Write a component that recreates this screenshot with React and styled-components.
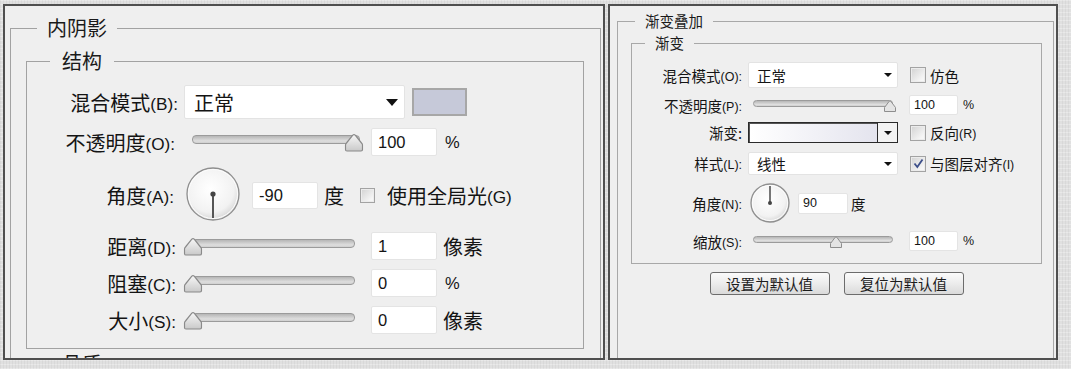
import React, { useId } from "react";
import styled, { createGlobalStyle } from "styled-components";

const GlobalStyle = createGlobalStyle`
  html, body { margin: 0; padding: 0; }
  body {
    width: 1071px;
    height: 369px;
    overflow: hidden;
    background-color: #e0e0e0;
    background-image:
      repeating-linear-gradient(90deg, rgba(0,0,0,0.035) 0 1px, transparent 1px 3px),
      repeating-linear-gradient(0deg, rgba(255,255,255,0.3) 0 1px, transparent 1px 4px);
    font-family: "Noto Sans CJK SC", "Liberation Sans", sans-serif;
    color: #141414;
  }
`;

const Page = styled.div`
  display: flex;
  align-items: flex-start;
  gap: 3px;
  padding: 4px 0 0 3px;
`;

const Panel = styled.div`
  box-sizing: border-box;
  width: ${p => p.$w}px;
  height: 356px;
  border: 2px solid #4f4f4f;
  background: #efefef;
  overflow: hidden;
  padding: ${p => p.$pad};
  font-size: ${p => (p.$sm ? "14.5px" : "20px")};
`;

const Group = styled.fieldset`
  margin: ${p => p.$m || "0"};
  padding: ${p => p.$pad};
  border: 1px solid ${p => (p.$sm ? "#a8a8a8" : "#a2a2a2")};
  min-width: 0;
  ${p => p.$minH && `min-height: ${p.$minH}px;`}
`;

const Legend = styled.legend`
  margin-left: ${p => p.$ml}px;
  padding: 0 ${p => p.$pl}px;
  font-size: ${p => (p.$sm ? "14.5px" : "20px")};
  line-height: ${p => (p.$sm ? "18px" : "24px")};
  color: #1a1a1a;
`;

const Rows = styled.div`
  display: flex;
  flex-direction: column;
`;

const Row = styled.div`
  display: flex;
  align-items: center;
  height: ${p => p.$h}px;
  margin-bottom: ${p => p.$mb || 0}px;
`;

const Label = styled.span`
  flex: none;
  width: ${p => p.$w}px;
  text-align: right;
  white-space: nowrap;
`;

const Key = styled.span`
  font-family: "Liberation Sans", sans-serif;
  font-size: 0.86em;
  vertical-align: 0.07em;
`;

const Select = styled.div`
  box-sizing: border-box;
  flex: none;
  display: flex;
  align-items: center;
  justify-content: space-between;
  width: ${p => p.$w}px;
  height: 100%;
  margin-left: ${p => p.$ml}px;
  padding: 0 ${p => (p.$sm ? 5 : 6)}px 0 ${p => (p.$sm ? 8 : 9)}px;
  background: #fff;
  border: 1px solid #e3e3e3;
  border-radius: 2px;
`;

const Caret = styled.span`
  width: 0;
  height: 0;
  border-left: ${p => (p.$sm ? 4 : 6.5)}px solid transparent;
  border-right: ${p => (p.$sm ? 4 : 6.5)}px solid transparent;
  border-top: ${p => (p.$sm ? 4 : 7)}px solid #111;
`;

const Swatch = styled.span`
  box-sizing: border-box;
  width: 55px;
  height: 28px;
  margin-left: 7px;
  background: #c6c9d9;
  border: 2px solid #a7a7a7;
`;

const NumField = styled.div`
  box-sizing: border-box;
  flex: none;
  display: flex;
  align-items: center;
  width: ${p => p.$w}px;
  height: ${p => p.$h}px;
  margin-left: ${p => p.$ml}px;
  padding-left: ${p => (p.$sm ? 4 : 6)}px;
  background: #fff;
  border: 1px solid #e4e4e4;
  border-radius: 2px;
  font-family: "Liberation Sans", sans-serif;
  font-size: ${p => (p.$sm ? "12.5px" : "16.5px")};
`;

const Unit = styled.span`
  margin-left: ${p => p.$ml}px;
  white-space: nowrap;
  ${p => p.$latin && `font-family: "Liberation Sans", sans-serif; font-size: ${p.$sm ? "12.5px" : "16.5px"};`}
`;

const SliderBox = styled.div`
  position: relative;
  box-sizing: border-box;
  flex: none;
  display: flex;
  align-items: center;
  width: ${p => p.$w}px;
  height: 100%;
  margin-left: ${p => p.$ml}px;
  padding: ${p => (p.$sm ? "0 5px" : `0 ${p.$pr}px 0 7px`)};
`;

const Track = styled.div`
  flex: 1;
  height: ${p => (p.$sm ? 5 : 7)}px;
  margin-top: ${p => (p.$sm ? -4 : -6)}px;
  border: 1px solid #9b9b9b;
  border-radius: 4px;
  background: linear-gradient(#b6b6b6, #dedede 70%, #cfcfcf);
`;

const Thumb = styled.div`
  position: absolute;
  top: calc(50% - ${p => (p.$sm ? 5 : 9)}px);
  display: flex;
  transform: translateX(-50%);
`;

const DialSvg = styled.svg`
  flex: none;
  margin-left: ${p => p.$ml}px;
  margin-top: ${p => p.$mt || 0}px;
`;

const CheckBox = styled.span`
  box-sizing: border-box;
  flex: none;
  display: flex;
  align-items: center;
  justify-content: center;
  width: ${p => (p.$sm ? 16 : 15)}px;
  height: ${p => (p.$sm ? 16 : 15)}px;
  margin-left: ${p => p.$ml}px;
  border: 1px solid #a3a3a3;
  background: linear-gradient(135deg, #d2d2d2, #f6f6f6 80%);
  box-shadow: inset 0 0 0 1px #ececec;
`;

const CheckText = styled.span`
  margin-left: ${p => p.$ml}px;
  white-space: nowrap;
`;

const GradField = styled.div`
  box-sizing: border-box;
  flex: none;
  display: flex;
  width: 150px;
  height: 100%;
  margin-left: 6px;
  border: 1px solid #2a2a2a;
  box-shadow: inset 1px 1px 0 #555;
`;

const GradFill = styled.div`
  flex: 1;
  margin: 1px 0 0 1px;
  background: linear-gradient(90deg, #ffffff, #e4e4ee);
`;

const GradDrop = styled.div`
  display: flex;
  align-items: center;
  justify-content: center;
  width: 19px;
  border-left: 1px solid #2a2a2a;
  background: #f3f3f3;
`;

const ButtonRow = styled.div`
  display: flex;
  justify-content: center;
  gap: 14px;
  margin-top: 8px;
`;

const Btn = styled.button`
  box-sizing: border-box;
  width: 120px;
  height: 23px;
  padding: 0;
  border: 1px solid #6c6c6c;
  border-radius: 3px;
  background: linear-gradient(#fbfbfb, #ececec 50%, #dadada);
  font-family: "Noto Sans CJK SC", sans-serif;
  font-size: 14.5px;
  line-height: 21px;
  color: #1c1c1c;
`;

const Slider = ({ sm, w, ml, value, pr = 2 }) => {
  const pad = 8;
  return (
    <SliderBox $sm={sm} $w={w} $ml={ml} $pr={pr}>
      <Track $sm={sm} />
      <Thumb
        $sm={sm}
        style={{ left: `calc(${pad}px + ${value / 100} * (100% - ${pad * 2}px))` }}
      >
        {sm ? (
          <svg width="14" height="12" viewBox="0 0 14 12">
            <path
              d="M1.5 11.5 L1.5 7.5 L6.2 1.3 Q7 0.5 7.8 1.3 L12.5 7.5 L12.5 11.5 Z"
              fill="#e4e4e4"
              stroke="#8e8e8e"
              strokeLinejoin="round"
            />
          </svg>
        ) : (
          <svg width="19" height="19" viewBox="0 0 19 19">
            <defs>
              <linearGradient id="thumbLg" x1="0" y1="0" x2="0" y2="1">
                <stop offset="0" stopColor="#f7f7f7" />
                <stop offset="1" stopColor="#c9c9c9" />
              </linearGradient>
            </defs>
            <path
              d="M2.5 18 Q1 18 1 16.5 L1 12 Q1 11 2 10 L8.3 2.2 Q9.5 1 10.7 2.2 L17 10 Q18 11 18 12 L18 16.5 Q18 18 16.5 18 Z"
              fill="url(#thumbLg)"
              stroke="#8a8a8a"
              strokeWidth="1.2"
            />
          </svg>
        )}
      </Thumb>
    </SliderBox>
  );
};

const Dial = ({ size, angle, ml, mt }) => {
  const id = useId().replace(/:/g, "");
  const r = size / 2;
  const len = r - 3;
  const rad = (angle * Math.PI) / 180;
  const x2 = r + len * Math.cos(rad);
  const y2 = r - len * Math.sin(rad);
  return (
    <DialSvg $ml={ml} $mt={mt} width={size} height={size} viewBox={`0 0 ${size} ${size}`}>
      <defs>
        <radialGradient id={id} cx="0.45" cy="0.4" r="0.6">
          <stop offset="0" stopColor="#ffffff" />
          <stop offset="0.75" stopColor="#f2f2f2" />
          <stop offset="1" stopColor="#d8d8d8" />
        </radialGradient>
      </defs>
      <circle cx={r} cy={r} r={r - 1} fill={`url(#${id})`} stroke="#8f8f8f" strokeWidth="1.3" />
      <circle cx={r} cy={r} r={r - 2.5} fill="none" stroke="#fdfdfd" strokeWidth="1" />
      <line x1={r} y1={r} x2={x2} y2={y2} stroke="#555" strokeWidth={size > 45 ? 2 : 1.6} />
      <circle cx={r} cy={r} r={size > 45 ? 2.6 : 2} fill="#444" />
    </DialSvg>
  );
};

const Tick = () => (
  <svg width="11" height="11" viewBox="0 0 11 11">
    <polyline points="1.5,5.5 4.3,9 9.5,1.5" fill="none" stroke="#3d4f8a" strokeWidth="1.8" />
  </svg>
);

const InnerShadow = () => (
  <Panel $w={602} $pad="10px 2px 0 5px">
    <Group $pad="9px 16px 0 15px" $minH={400}>
      <Legend $ml={11} $pl={10}>内阴影</Legend>
      <Group $pad="12px 0 14px 0">
        <Legend $ml={23} $pl={12}>结构</Legend>
        <Rows>
          <Row $h={34} $mb={9}>
            <Label $w={151}>混合模式<Key>(B):</Key></Label>
            <Select $w={221} $ml={6}>
              正常
              <Caret />
            </Select>
            <Swatch />
          </Row>
          <Row $h={28} $mb={12}>
            <Label $w={148}>不透明度<Key>(O):</Key></Label>
            <Slider w={177} ml={10} value={100} />
            <NumField $w={66} $h={28} $ml={9}>100</NumField>
            <Unit $ml={8} $latin>%</Unit>
          </Row>
          <Row $h={54} $mb={10}>
            <Label $w={147}>角度<Key>(A):</Key></Label>
            <Dial size={54} angle={-90} ml={12} mt={-3} />
            <NumField $w={66} $h={27} $ml={12}>-90</NumField>
            <Unit $ml={6}>度</Unit>
            <CheckBox $ml={16} />
            <CheckText $ml={12}>使用全局光<Key>(G)</Key></CheckText>
          </Row>
          <Row $h={28} $mb={9}>
            <Label $w={149}>距离<Key>(D):</Key></Label>
            <Slider w={177} ml={9} value={0} pr={7} />
            <NumField $w={66} $h={28} $ml={9}>1</NumField>
            <Unit $ml={6}>像素</Unit>
          </Row>
          <Row $h={28} $mb={9}>
            <Label $w={149}>阻塞<Key>(C):</Key></Label>
            <Slider w={177} ml={9} value={0} pr={7} />
            <NumField $w={66} $h={28} $ml={9}>0</NumField>
            <Unit $ml={8} $latin>%</Unit>
          </Row>
          <Row $h={28}>
            <Label $w={149}>大小<Key>(S):</Key></Label>
            <Slider w={177} ml={9} value={0} pr={7} />
            <NumField $w={66} $h={28} $ml={9}>0</NumField>
            <Unit $ml={6}>像素</Unit>
          </Row>
        </Rows>
      </Group>
      <Group $m="3px 0 0 0" $pad="12px 0 14px 0" $minH={80}>
        <Legend $ml={23} $pl={12}>品质</Legend>
      </Group>
    </Group>
  </Panel>
);

const GradientOverlay = () => (
  <Panel $w={450} $sm $pad="6px 2px 0 7px">
    <Group $sm $pad="4px 11px 0 13px" $minH={400}>
      <Legend $sm $ml={4} $pl={10}>渐变叠加</Legend>
      <Group $sm $pad="10px 0 12px 0">
        <Legend $sm $ml={13} $pl={10}>渐变</Legend>
        <Rows>
          <Row $h={26} $mb={7}>
            <Label $w={110}>混合模式<Key>(O):</Key></Label>
            <Select $sm $w={150} $ml={6}>
              正常
              <Caret $sm />
            </Select>
            <CheckBox $sm $ml={12} />
            <CheckText $ml={4}>仿色</CheckText>
          </Row>
          <Row $h={20} $mb={7}>
            <Label $w={110}>不透明度<Key>(P):</Key></Label>
            <Slider sm w={150} ml={6} value={100} />
            <NumField $sm $w={49} $h={20} $ml={11}>100</NumField>
            <Unit $sm $latin $ml={5}>%</Unit>
          </Row>
          <Row $h={21} $mb={9}>
            <Label $w={110}>渐变:</Label>
            <GradField>
              <GradFill />
              <GradDrop>
                <Caret $sm />
              </GradDrop>
            </GradField>
            <CheckBox $sm $ml={12} />
            <CheckText $ml={4}>反向<Key>(R)</Key></CheckText>
          </Row>
          <Row $h={23} $mb={8}>
            <Label $w={110}>样式<Key>(L):</Key></Label>
            <Select $sm $w={150} $ml={6}>
              线性
              <Caret $sm />
            </Select>
            <CheckBox $sm $ml={12}>
              <Tick />
            </CheckBox>
            <CheckText $ml={4}>与图层对齐<Key>(I)</Key></CheckText>
          </Row>
          <Row $h={40} $mb={8}>
            <Label $w={110}>角度<Key>(N):</Key></Label>
            <Dial size={40} angle={90} ml={8} />
            <NumField $sm $w={50} $h={21} $ml={8}>90</NumField>
            <Unit $ml={3}>度</Unit>
          </Row>
          <Row $h={20}>
            <Label $w={110}>缩放<Key>(S):</Key></Label>
            <Slider sm w={150} ml={6} value={60} />
            <NumField $sm $w={49} $h={20} $ml={11}>100</NumField>
            <Unit $sm $latin $ml={5}>%</Unit>
          </Row>
        </Rows>
      </Group>
      <ButtonRow>
        <Btn>设置为默认值</Btn>
        <Btn>复位为默认值</Btn>
      </ButtonRow>
    </Group>
  </Panel>
);

export default function App() {
  return (
    <>
      <GlobalStyle />
      <Page>
        <InnerShadow />
        <GradientOverlay />
      </Page>
    </>
  );
}
